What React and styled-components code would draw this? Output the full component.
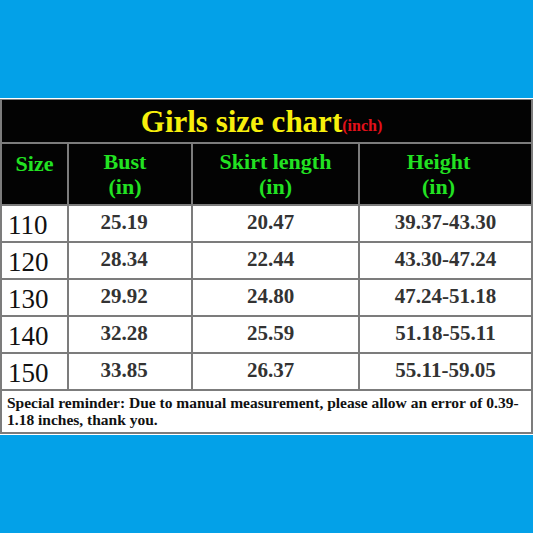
import React from "react";
import styled, { createGlobalStyle } from "styled-components";

const GlobalStyle = createGlobalStyle`
  html, body {
    margin: 0;
    padding: 0;
  }
  body {
    font-family: "Liberation Serif", "Times New Roman", serif;
  }
`;

const serif = `"Liberation Serif", "Times New Roman", serif`;

const Page = styled.div`
  width: 533px;
  height: 533px;
  background: #03a1e8;
  padding-top: 98px;
  box-sizing: border-box;
`;

const Frame = styled.div`
  background: #ffffff;
  padding: 1px 0 1px 0;
`;

const Chart = styled.div`
  display: grid;
  grid-template-columns: 65px 122px 165px 1fr;
  grid-template-rows: 42px 60px repeat(5, 35px) 41px;
  gap: 2px;
  padding: 1px 2px 2px 2px;
  background: #7c7c7c;
`;

const Title = styled.div`
  grid-column: 1 / -1;
  background: #030303;
  display: flex;
  align-items: center;
  justify-content: center;
  padding: 2px 10px 0 0;
  font-family: ${serif};
  font-weight: bold;
  font-size: 31px;
  color: #f7ef0c;
`;

const Unit = styled.span`
  font-size: 16px;
  color: #e3101a;
  margin-top: 8px;
`;

const HeadCell = styled.div`
  background: #030303;
  color: #22e222;
  font-family: ${serif};
  font-weight: bold;
  font-size: 22px;
  line-height: 25px;
  text-align: center;
  padding: ${(p) => (p.$single ? "7px" : "5px")} ${(p) => p.$shift || 0}px 0 0;
`;

const SizeCell = styled.div`
  background: #ffffff;
  color: #111;
  font-family: ${serif};
  font-size: 27px;
  display: flex;
  align-items: center;
  padding: 4px 0 0 6px;
`;

const Cell = styled.div`
  background: #ffffff;
  color: #333;
  font-family: ${serif};
  font-weight: bold;
  font-size: 21px;
  display: flex;
  align-items: center;
  justify-content: center;
  padding: 0 ${(p) => p.$shift || 0}px 3px 0;
`;

const Note = styled.div`
  grid-column: 1 / -1;
  background: #ffffff;
  color: #111;
  font-family: ${serif};
  font-weight: bold;
  font-size: 15.5px;
  line-height: 17px;
  padding: 3px 4px 0 5px;
`;

const rows = [
  ["110", "25.19", "20.47", "39.37-43.30"],
  ["120", "28.34", "22.44", "43.30-47.24"],
  ["130", "29.92", "24.80", "47.24-51.18"],
  ["140", "32.28", "25.59", "51.18-55.11"],
  ["150", "33.85", "26.37", "55.11-59.05"],
];

export default function App() {
  return (
    <>
      <GlobalStyle />
      <Page>
        <Frame>
          <Chart>
            <Title>
              Girls size chart<Unit>(inch)</Unit>
            </Title>
            <HeadCell $single>Size</HeadCell>
            <HeadCell $shift={10}>Bust<br />(in)</HeadCell>
            <HeadCell>Skirt length<br />(in)</HeadCell>
            <HeadCell $shift={14}>Height<br />(in)</HeadCell>
            {rows.map(([size, bust, skirt, height]) => (
              <React.Fragment key={size}>
                <SizeCell>{size}</SizeCell>
                <Cell $shift={12}>{bust}</Cell>
                <Cell $shift={10}>{skirt}</Cell>
                <Cell>{height}</Cell>
              </React.Fragment>
            ))}
            <Note>
              Special reminder: Due to manual measurement, please allow an error of 0.39-
              1.18 inches, thank you.
            </Note>
          </Chart>
        </Frame>
      </Page>
    </>
  );
}
